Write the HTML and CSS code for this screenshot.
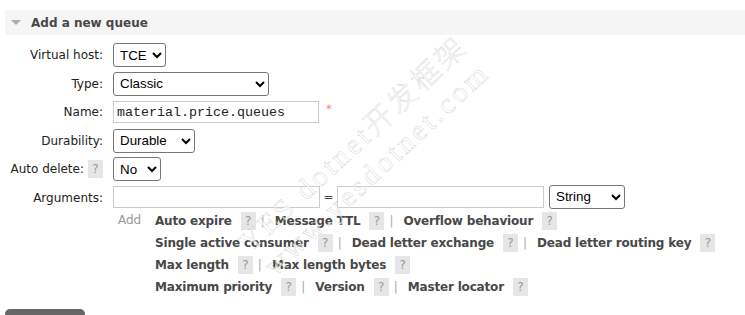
FILE: index.html
```html
<!DOCTYPE html>
<html lang="en">
<head>
    <meta charset="UTF-8">
    <title>Add a new queue</title>
    <link rel="stylesheet" href="styles.css">
</head>
<body>
    <div class="section">
        <h2 class="section-title"><span class="arrow"></span>Add a new queue</h2>

        <div class="form">
            <label class="form-label">Virtual host:</label>
            <div class="form-field">
                <select class="select select-vhost">
                    <option>TCE</option>
                </select>
            </div>

            <label class="form-label">Type:</label>
            <div class="form-field">
                <select class="select select-type">
                    <option>Classic</option>
                </select>
            </div>

            <label class="form-label">Name:</label>
            <div class="form-field">
                <input class="text-input name-input" type="text" value="material.price.queues">
                <span class="mand">*</span>
            </div>

            <label class="form-label">Durability:</label>
            <div class="form-field">
                <select class="select select-durable">
                    <option>Durable</option>
                </select>
            </div>

            <label class="form-label">Auto delete: <span class="help">?</span></label>
            <div class="form-field">
                <select class="select select-auto">
                    <option>No</option>
                </select>
            </div>

            <label class="form-label">Arguments:</label>
            <div class="form-field args">
                <div class="args-row">
                    <input class="text-input arg-input" type="text">
                    <span class="equals">=</span>
                    <input class="text-input arg-input" type="text">
                    <select class="select select-string">
                        <option>String</option>
                    </select>
                </div>
                <div class="arg-links">
                    <span class="add-label">Add</span>
                    <div class="link-lines">
                        <div class="link-line">
                            <span class="arg-link">Auto expire</span><span class="help">?</span><span class="sep">|</span>
                            <span class="arg-link">Message TTL</span><span class="help">?</span><span class="sep">|</span>
                            <span class="arg-link">Overflow behaviour</span><span class="help">?</span>
                        </div>
                        <div class="link-line">
                            <span class="arg-link">Single active consumer</span><span class="help">?</span><span class="sep">|</span>
                            <span class="arg-link">Dead letter exchange</span><span class="help">?</span><span class="sep">|</span>
                            <span class="arg-link">Dead letter routing key</span><span class="help">?</span>
                        </div>
                        <div class="link-line">
                            <span class="arg-link">Max length</span><span class="help">?</span><span class="sep">|</span>
                            <span class="arg-link">Max length bytes</span><span class="help">?</span>
                        </div>
                        <div class="link-line">
                            <span class="arg-link">Maximum priority</span><span class="help">?</span><span class="sep">|</span>
                            <span class="arg-link">Version</span><span class="help">?</span><span class="sep">|</span>
                            <span class="arg-link">Master locator</span><span class="help">?</span>
                        </div>
                    </div>
                </div>
            </div>
        </div>

        <!-- label sits below the fold in the screenshot -->
        <button class="submit-button" aria-label="Add queue"></button>
    </div>

    <div class="watermark">
        <div>YES dotnet开发框架</div>
        <div>www.yesdotnet.com</div>
    </div>
</body>
</html>
```

FILE: styles.css
```css
body {
    margin: 0;
    position: relative;
    overflow: hidden;
    height: 315px;
    font-family: "DejaVu Sans", Verdana, sans-serif;
    font-size: 12px;
    color: #222;
    background: #fff;
}

.section {
    padding: 10px 0 0 5px;
}

.section-title {
    margin: 0;
    height: 25px;
    display: flex;
    align-items: center;
    background: #f5f5f5;
    font-size: 12px;
    font-weight: bold;
    color: #484848;
}

.arrow {
    width: 0;
    height: 0;
    margin: 0 10px 0 6px;
    border-left: 5px solid transparent;
    border-right: 5px solid transparent;
    border-top: 5px solid #aaa;
}

.form {
    display: grid;
    grid-template-columns: 99px auto;
    column-gap: 9px;
    row-gap: 4.5px;
    margin-top: 8px;
}

.form-label {
    display: flex;
    justify-content: flex-end;
    align-items: center;
    height: 24px;
    white-space: nowrap;
    padding-right: 1px;
}

.form-label .help {
    margin-left: 4px;
}

.form-field {
    display: flex;
    align-items: center;
    min-height: 24px;
}

.select {
    height: 24px;
    font-family: "Liberation Sans", Arial, sans-serif;
    font-size: 13.33px;
    color: #000;
    background: #fff;
    border: 1px solid #767676;
    border-radius: 3px;
    padding: 0 2px;
}

.select-vhost { width: 53px; }
.select-type { width: 156px; }
.select-durable { width: 82px; }
.select-auto { width: 48px; }
.select-string { width: 76px; margin-left: 5px; }

.text-input {
    box-sizing: border-box;
    height: 22px;
    border: 1px solid #ccc;
    padding: 0 3px;
    margin: 0;
    font-family: "Liberation Mono", "Courier New", monospace;
    font-size: 13.33px;
    color: #222;
}

.name-input { width: 206px; }
.arg-input { width: 207px; }

.mand {
    margin: -6px 0 0 7px;
    color: #f88;
    font-size: 12px;
}

.args {
    flex-direction: column;
    align-items: flex-start;
}

.args-row {
    display: flex;
    align-items: center;
    height: 24px;
    margin-top: -1px;
}

.equals {
    width: 17px;
    text-align: center;
    color: #444;
}

.arg-links {
    display: flex;
    align-items: flex-start;
    margin-top: 1px;
}

.add-label {
    width: 37px;
    padding-left: 5px;
    line-height: 20px;
    color: #999;
}

.link-line {
    display: flex;
    align-items: center;
    height: 22px;
    white-space: nowrap;
}

.arg-link {
    font-weight: bold;
    letter-spacing: -0.18px;
    color: #484848;
}

.help {
    display: inline-block;
    width: 15px;
    height: 18px;
    line-height: 18px;
    text-align: center;
    background: #e6e6e6;
    color: #999;
    font-weight: normal;
}

.arg-link + .help {
    margin-left: 9px;
}

.sep {
    margin: 0 10px 0 5px;
    color: #aaa;
}

.submit-button {
    display: block;
    margin-top: 11px;
    width: 80px;
    height: 30px;
    border: none;
    border-radius: 5px;
    background: #666;
}

.watermark {
    position: absolute;
    left: 365px;
    top: 156px;
    transform: translate(-50%, -50%) rotate(-43deg);
    font-family: "Liberation Serif", "Noto Sans CJK SC", serif;
    font-size: 29px;
    font-weight: 300;
    letter-spacing: 3.5px;
    line-height: 34px;
    text-align: center;
    white-space: nowrap;
    color: rgba(255, 255, 255, 0.7);
    -webkit-text-stroke: 0.5px rgba(160, 160, 160, 0.45);
    pointer-events: none;
}
```
